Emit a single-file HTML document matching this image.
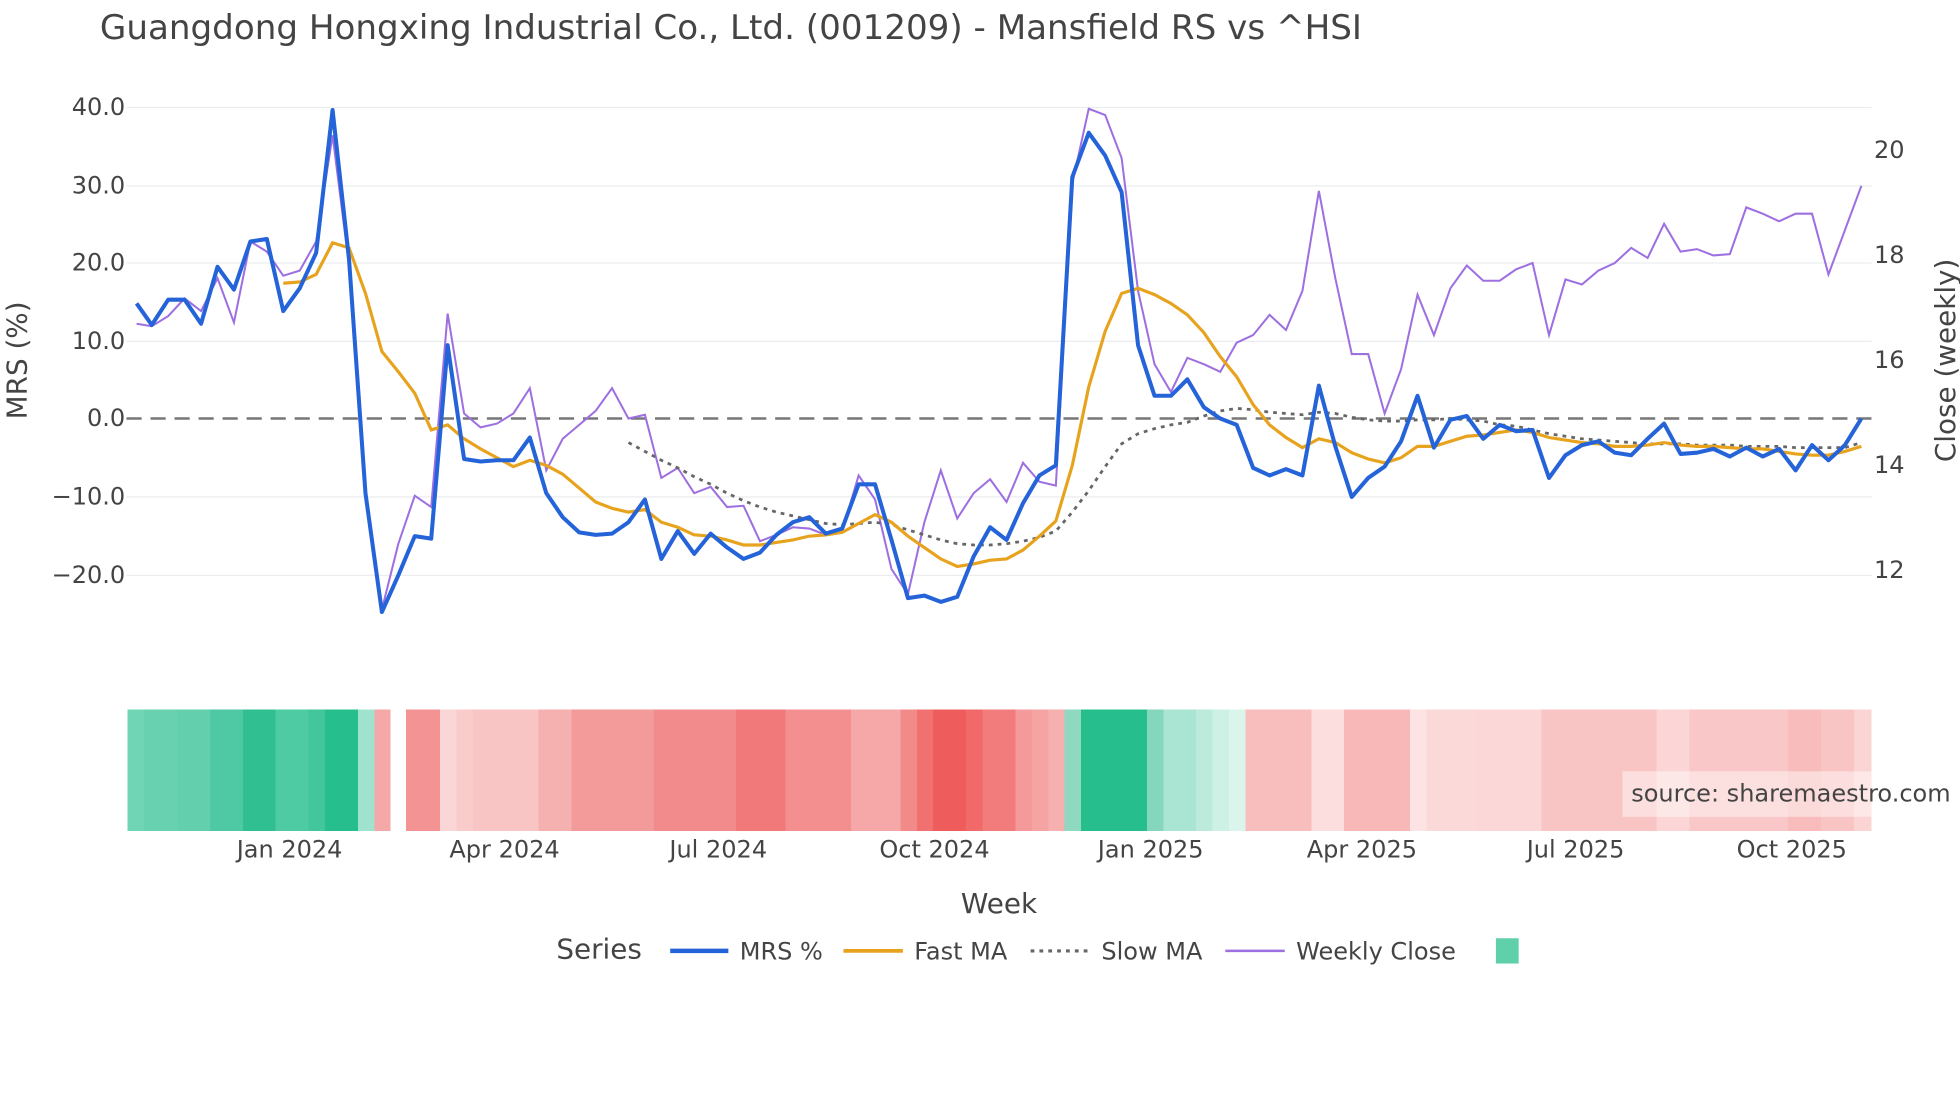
<!DOCTYPE html>
<html><head><meta charset="utf-8"><style>html,body{margin:0;padding:0;background:#fff;width:1960px;height:1102px;overflow:hidden}svg{display:block}text{font-family:"DejaVu Sans","Liberation Sans",sans-serif;fill:#444}</style></head><body>
<svg width="1960" height="1102" viewBox="0 0 1550 871.5" xmlns="http://www.w3.org/2000/svg">
<rect width="1550" height="872" fill="#fff"/>
<text x="79" y="31" font-size="27" fill="#333">Guangdong Hongxing Industrial Co., Ltd. (001209) - Mansfield RS vs ^HSI</text>
<g stroke="#ebedf0" stroke-width="1">
<line x1="100" x2="1480" y1="85" y2="85"/><line x1="100" x2="1480" y1="147" y2="147"/><line x1="100" x2="1480" y1="208" y2="208"/><line x1="100" x2="1480" y1="270" y2="270"/><line x1="100" x2="1480" y1="393" y2="393"/><line x1="100" x2="1480" y1="455" y2="455"/>
</g>
<line x1="100" x2="1480" y1="331" y2="331" stroke="#777" stroke-width="2" stroke-dasharray="12,7"/>
<g font-size="19" text-anchor="end">
<text x="99" y="91">40.0</text><text x="99" y="153">30.0</text><text x="99" y="214">20.0</text><text x="99" y="276">10.0</text><text x="99" y="337">0.0</text><text x="99" y="399">−10.0</text><text x="99" y="461">−20.0</text>
</g>
<g font-size="19"><text x="1482" y="125">20</text><text x="1482" y="208">18</text><text x="1482" y="291">16</text><text x="1482" y="374">14</text><text x="1482" y="457">12</text></g>
<text transform="translate(21,285) rotate(-90)" font-size="22" text-anchor="middle">MRS (%)</text>
<text transform="translate(1546,285) rotate(-90)" font-size="22" text-anchor="middle">Close (weekly)</text>
<polyline fill="none" stroke="#9d6fe0" stroke-width="1.6" points="108,256 120,258 133,250 146,236 159,246 172,220 185,255 198,191 211,199 224,218 237,214 250,191 263,107 276,210 289,390 302,482 315,430 328,392 341,401 354,248 367,327 380,338 393,335 406,327 419,307 432,372 445,347 458,336 471,325 484,307 497,331 510,328 523,378 536,370 549,390 562,385 575,401 588,400 601,428 614,423 627,417 640,418 653,423 666,420 679,376 692,395 705,450 718,470 731,413 744,372 757,410 770,390 783,379 796,397 809,366 822,381 835,384 848,145 861,86 874,91 887,125 900,230 913,288 926,310 939,283 952,288 965,294 978,271 991,265 1004,249 1017,261 1030,230 1043,151 1056,220 1069,280 1082,280 1095,327 1108,292 1121,233 1134,265 1147,228 1160,210 1173,222 1186,222 1199,213 1212,208 1225,265 1238,221 1251,225 1264,214 1277,208 1290,196 1303,204 1316,177 1329,199 1342,197 1355,202 1368,201 1381,164 1394,169 1407,175 1420,169 1433,169 1446,217 1459,182 1472,147"/>
<polyline fill="none" stroke="#666" stroke-width="2.2" stroke-dasharray="3,4" points="497,350 510,357 523,364 536,370 549,377 562,383 575,390 588,396 601,401 614,405 627,408 640,411 653,414 666,415 679,414 692,413 705,415 718,419 731,423 744,427 757,430 770,431 783,431 796,430 809,428 822,425 835,420 848,405 861,388 874,369 887,351 900,343 913,339 926,336 939,334 952,329 965,325 978,323 991,324 1004,326 1017,327 1030,328 1043,326 1056,327 1069,330 1082,332 1095,333 1108,333 1121,332 1134,332 1147,331 1160,332 1173,333 1186,336 1199,337 1212,340 1225,343 1238,345 1251,347 1264,348 1277,349 1290,350 1303,351 1316,351 1329,351 1342,352 1355,352 1368,352 1381,353 1394,353 1407,353 1420,354 1433,354 1446,354 1459,354 1472,350"/>
<polyline fill="none" stroke="#e8a31e" stroke-width="2.5" points="224,224 237,223 250,217 263,192 276,196 289,232 302,278 315,294 328,311 341,340 354,336 367,347 380,355 393,362 406,369 419,364 432,368 445,375 458,386 471,397 484,402 497,405 510,403 523,413 536,417 549,423 562,424 575,427 588,431 601,431 614,429 627,427 640,424 653,423 666,421 679,414 692,407 705,413 718,424 731,433 744,442 757,448 770,446 783,443 796,442 809,435 822,424 835,412 848,368 861,306 874,262 887,232 900,228 913,233 926,240 939,249 952,263 965,282 978,298 991,320 1004,336 1017,346 1030,354 1043,347 1056,350 1069,358 1082,363 1095,366 1108,362 1121,353 1134,353 1147,349 1160,345 1173,344 1186,342 1199,340 1212,342 1225,346 1238,348 1251,350 1264,351 1277,353 1290,353 1303,352 1316,350 1329,352 1342,353 1355,353 1368,354 1381,355 1394,355 1407,357 1420,359 1433,360 1446,360 1459,357 1472,353"/>
<polyline fill="none" stroke="#2563d9" stroke-width="3.2" stroke-linejoin="round" points="108,240 120,257 133,237 146,237 159,256 172,211 185,229 198,191 211,189 224,246 237,228 250,200 263,87 276,205 289,390 302,484 315,455 328,424 341,426 354,273 367,363 380,365 393,364 406,364 419,346 432,390 445,409 458,421 471,423 484,422 497,413 510,395 523,442 536,420 549,438 562,422 575,433 588,442 601,437 614,423 627,413 640,409 653,422 666,418 679,383 692,383 705,427 718,473 731,471 744,476 757,472 770,440 783,417 796,427 809,398 822,376 835,368 848,140 861,105 874,123 887,152 900,273 913,313 926,313 939,300 952,322 965,331 978,336 991,370 1004,376 1017,371 1030,376 1043,305 1056,353 1069,393 1082,378 1095,369 1108,349 1121,313 1134,354 1147,332 1160,329 1173,347 1186,336 1199,341 1212,340 1225,378 1238,360 1251,352 1264,349 1277,358 1290,360 1303,347 1316,335 1329,359 1342,358 1355,355 1368,361 1381,354 1394,361 1407,355 1420,372 1433,352 1446,364 1459,352 1472,331"/>
<g shape-rendering="crispEdges">
<rect x="101" y="561" width="13" height="96" fill="#6fd5b5"/><rect x="114" y="561" width="26" height="96" fill="#68d2b0"/><rect x="140" y="561" width="26" height="96" fill="#63cfad"/><rect x="166" y="561" width="26" height="96" fill="#4ec9a3"/><rect x="192" y="561" width="26" height="96" fill="#2fbf90"/><rect x="218" y="561" width="26" height="96" fill="#4ecba3"/><rect x="244" y="561" width="13" height="96" fill="#43c69c"/><rect x="257" y="561" width="26" height="96" fill="#27be8d"/><rect x="283" y="561" width="13" height="96" fill="#9fe2cd"/><rect x="296" y="561" width="13" height="96" fill="#f4a8a8"/>
<rect x="321" y="561" width="27" height="96" fill="#f39393"/><rect x="348" y="561" width="13" height="96" fill="#fbd6d6"/><rect x="361" y="561" width="13" height="96" fill="#f9cbcb"/><rect x="374" y="561" width="52" height="96" fill="#f8c4c4"/><rect x="426" y="561" width="26" height="96" fill="#f5b0b0"/><rect x="452" y="561" width="65" height="96" fill="#f39a9a"/><rect x="517" y="561" width="65" height="96" fill="#f28b8b"/><rect x="582" y="561" width="39" height="96" fill="#f17979"/><rect x="621" y="561" width="52" height="96" fill="#f38f8f"/><rect x="673" y="561" width="39" height="96" fill="#f6a8a8"/><rect x="712" y="561" width="13" height="96" fill="#f38a8a"/><rect x="725" y="561" width="13" height="96" fill="#f17070"/><rect x="738" y="561" width="26" height="96" fill="#ef5c5c"/><rect x="764" y="561" width="13" height="96" fill="#f16969"/><rect x="777" y="561" width="26" height="96" fill="#f27c7c"/><rect x="803" y="561" width="13" height="96" fill="#f49a9a"/><rect x="816" y="561" width="13" height="96" fill="#f5a3a3"/><rect x="829" y="561" width="13" height="96" fill="#f7b0b0"/><rect x="842" y="561" width="13" height="96" fill="#8fd9c0"/><rect x="855" y="561" width="52" height="96" fill="#27be8d"/><rect x="907" y="561" width="13" height="96" fill="#84d6bc"/><rect x="920" y="561" width="26" height="96" fill="#a9e5d2"/><rect x="946" y="561" width="13" height="96" fill="#bcebdc"/><rect x="959" y="561" width="13" height="96" fill="#cdf1e5"/><rect x="972" y="561" width="13" height="96" fill="#dbf5ec"/><rect x="985" y="561" width="52" height="96" fill="#f8bebe"/><rect x="1037" y="561" width="26" height="96" fill="#fcdede"/><rect x="1063" y="561" width="52" height="96" fill="#f8b8b8"/><rect x="1115" y="561" width="13" height="96" fill="#fde3e3"/><rect x="1128" y="561" width="39" height="96" fill="#fcd9d9"/><rect x="1167" y="561" width="52" height="96" fill="#fbd7d7"/><rect x="1219" y="561" width="91" height="96" fill="#f9c4c4"/><rect x="1310" y="561" width="26" height="96" fill="#fcd6d6"/><rect x="1336" y="561" width="78" height="96" fill="#f9c7c7"/><rect x="1414" y="561" width="26" height="96" fill="#f8bcbc"/><rect x="1440" y="561" width="26" height="96" fill="#f9c4c4"/><rect x="1466" y="561" width="14" height="96" fill="#fbd4d4"/>
</g>
<rect x="1283" y="610" width="197" height="36" fill="#fff" opacity="0.45"/>
<text x="1290" y="634" font-size="19" fill="#888">source: sharemaestro.com</text>
<g font-size="19" text-anchor="middle">
<text x="229" y="678">Jan 2024</text><text x="399" y="678">Apr 2024</text><text x="568" y="678">Jul 2024</text><text x="739" y="678">Oct 2024</text><text x="910" y="678">Jan 2025</text><text x="1077" y="678">Apr 2025</text><text x="1246" y="678">Jul 2025</text><text x="1417" y="678">Oct 2025</text>
</g>
<text x="790" y="722" font-size="22" text-anchor="middle">Week</text>
<text x="440" y="758" font-size="22">Series</text>
<line x1="530" x2="576" y1="752" y2="752" stroke="#2563d9" stroke-width="3.5"/><text x="585" y="759" font-size="19">MRS %</text>
<line x1="667" x2="714" y1="752" y2="752" stroke="#e8a31e" stroke-width="3"/><text x="723" y="759" font-size="19">Fast MA</text>
<line x1="815" x2="860" y1="752" y2="752" stroke="#666" stroke-width="2.5" stroke-dasharray="3,4"/><text x="871" y="759" font-size="19">Slow MA</text>
<line x1="969" x2="1016" y1="752" y2="752" stroke="#9d6fe0" stroke-width="2"/><text x="1025" y="759" font-size="19">Weekly Close</text>
<rect x="1183" y="742" width="18" height="20" fill="#5fd0aa"/>
</svg>
</body></html>
